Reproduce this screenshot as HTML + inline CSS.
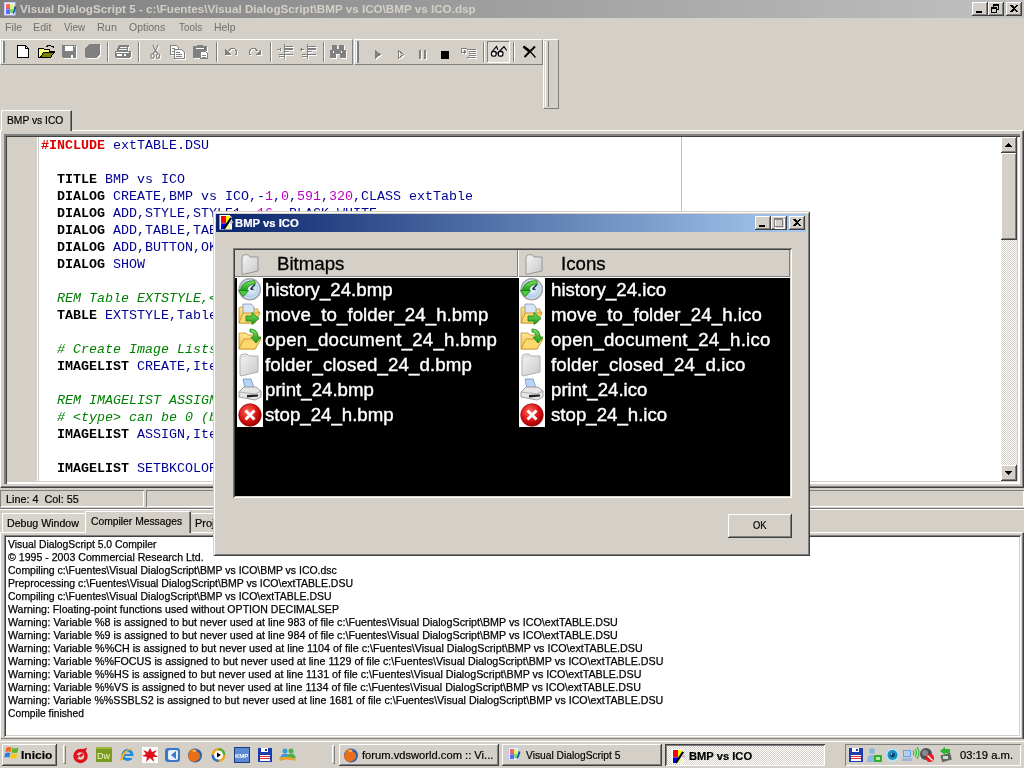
<!DOCTYPE html>
<html><head><meta charset="utf-8">
<style>
*{box-sizing:border-box}
html,body{margin:0;padding:0}
body{will-change:transform;width:1024px;height:768px;overflow:hidden;position:relative;background:#d4d0c8;font-family:"Liberation Sans",sans-serif;font-size:11px;color:#000}
.a{position:absolute}
.t{position:absolute;white-space:pre;line-height:1;transform-origin:0 0;-webkit-text-stroke-width:0.2px}
.raised{border-top:1px solid #fff;border-left:1px solid #fff;border-right:1px solid #808080;border-bottom:1px solid #808080}
.btn{position:absolute;background:#d4d0c8;box-shadow:inset -1px -1px 0 #404040,inset 1px 1px 0 #fff,inset -2px -2px 0 #808080}
.sunk{position:absolute;box-shadow:inset 1px 1px 0 #808080,inset -1px -1px 0 #fff,inset 2px 2px 0 #404040,inset -2px -2px 0 #d4d0c8}
.sep{position:absolute;width:2px;border-left:1px solid #808080;border-right:1px solid #fff}
.code{position:absolute;left:41px;font-family:"Liberation Mono",monospace;font-size:13.333px;line-height:17px;white-space:pre;color:#000094}
.k{font-weight:bold;color:#000}
.r{font-weight:bold;color:#e00000}
.n{color:#c000c0}
.c{font-style:italic;color:#008000}
.ol{-webkit-text-stroke-width:0.25px;position:absolute;left:8px;line-height:13px;white-space:pre;transform-origin:0 0}
</style></head>
<body>
<svg width="0" height="0" style="position:absolute">
<defs>
 <linearGradient id="gGreen" x1="0" y1="0" x2="0" y2="1"><stop offset="0" stop-color="#7fe060"/><stop offset="1" stop-color="#1a9a1a"/></linearGradient>
 <linearGradient id="gYel" x1="0" y1="0" x2="0" y2="1"><stop offset="0" stop-color="#fde89a"/><stop offset="1" stop-color="#f0b840"/></linearGradient>
 <radialGradient id="gRed" cx="0.4" cy="0.35" r="0.7"><stop offset="0" stop-color="#ff6a5a"/><stop offset="0.6" stop-color="#d81010"/><stop offset="1" stop-color="#8a0000"/></radialGradient>
 <linearGradient id="gGray" x1="0" y1="0" x2="1" y2="1"><stop offset="0" stop-color="#f4f4f4"/><stop offset="1" stop-color="#c8c8c8"/></linearGradient>
 <radialGradient id="gClock" cx="0.55" cy="0.5" r="0.6"><stop offset="0" stop-color="#eef6ff"/><stop offset="1" stop-color="#8fb8e0"/></radialGradient>
 <symbol id="iHist" viewBox="0 0 24 24">
  <circle cx="11.8" cy="11.2" r="10.5" fill="url(#gClock)" stroke="#a4a4ac" stroke-width="1.6"/>
  <circle cx="11.8" cy="11.2" r="9.2" fill="none" stroke="#e8eef4" stroke-width="0.8"/>
  <path d="M12.5 11 L17 6.5 M12.5 11 L15.5 11.5" stroke="#1a2a3a" stroke-width="1.4" fill="none"/>
  <path d="M2.3 12.5 Q3.5 3 16.5 2.6 L17.5 6 Q10 6 8.8 12.5 Z" fill="url(#gGreen)" stroke="#127812" stroke-width="0.7"/>
  <path d="M0.3 12.3 L10.5 12.6 L5.2 18.6 Z" fill="#4ccc3a" stroke="#127812" stroke-width="0.8"/>
 </symbol>
 <symbol id="iMove" viewBox="0 0 24 24">
  <path d="M1 5 L1 20 L16 20 L22 9 L20 9 L20 6 L10 6 L8 4 L2 4 Z" fill="url(#gYel)" stroke="#c89020" stroke-width="0.8"/>
  <path d="M5 1 L13 1 L16 4 L16 13 L5 13 Z" fill="#d8e4f8" stroke="#8090b0" stroke-width="0.8"/>
  <path d="M1 20 L5 10 L22 10 L17 20 Z" fill="#fcd870" stroke="#c89020" stroke-width="0.8"/>
  <path d="M8 13 L14 13 L14 9.5 L21 15.5 L14 21.5 L14 18 L8 18 Z" fill="url(#gGreen)" stroke="#168016" stroke-width="0.8"/>
 </symbol>
 <symbol id="iOpen" viewBox="0 0 24 24">
  <path d="M1 5 L1 21 L17 21 L23 10 L20 10 L20 7 L10 7 L8 5 Z" fill="url(#gYel)" stroke="#c89020" stroke-width="0.8"/>
  <path d="M1 21 L6 11 L23 11 L17 21 Z" fill="#fcd870" stroke="#c89020" stroke-width="0.8"/>
  <path d="M12 1 Q20 1 20 9 L23 9 L18 15 L13 9 L16 9 Q16 4 12 4 Z" fill="url(#gGreen)" stroke="#168016" stroke-width="0.8"/>
 </symbol>
 <symbol id="iFold" viewBox="0 0 24 24">
  <path d="M2 4 Q2 1 6 1 L9 1 L11 3 L20 3 L20 19 L3 23 L2 22 Z" fill="url(#gGray)" stroke="#a8a8a8" stroke-width="0.9"/>
  <path d="M2 6 Q5 2 9 3" stroke="#d0d0d0" fill="none"/>
 </symbol>
 <symbol id="iPrint" viewBox="0 0 24 24">
  <path d="M5 1 L13 1 L16 10 L7 11 Z" fill="#b8d4f4" stroke="#7090c0" stroke-width="0.8"/>
  <path d="M1 14 L6 9 L18 9 L23 13 L23 19 L17 22 L1 19 Z" fill="#e6e6e6" stroke="#8a8a8a" stroke-width="0.8"/>
  <path d="M1 14 L17 16 L23 13" stroke="#a0a0a0" fill="none" stroke-width="0.8"/>
  <path d="M9 17 L20 16.5 L20 18.5 L9 19.5 Z" fill="#202020"/>
 </symbol>
 <symbol id="iStop" viewBox="0 0 24 24">
  <circle cx="12" cy="12" r="11.3" fill="url(#gRed)" stroke="#900000" stroke-width="0.6"/>
  <path d="M7.5 7.5 L16.5 16.5 M16.5 7.5 L7.5 16.5" stroke="#fff" stroke-width="3"/>
 </symbol>
 <symbol id="iHdr" viewBox="0 0 18 21">
  <path d="M1 4 Q1 0.5 5 0.5 Q8 0.5 9 3 L17 3 L17 17 L1 20.5 Z" fill="url(#gGray)" stroke="#909090" stroke-width="0.9"/>
 </symbol>
</defs></svg>
<svg width="0" height="0" style="position:absolute"><defs>
 <symbol id="vdsIcon" viewBox="0 0 16 16">
  <path d="M1.5 1 H11.5 L14 3.5 V15.5 H1.5 Z" fill="#fff"/>
  <rect x="3" y="2" width="5" height="7" fill="#f00"/>
  <rect x="3" y="8.5" width="5" height="1" fill="#c02080"/>
  <rect x="3" y="9.5" width="5" height="5.5" fill="#0000f0"/>
  <path d="M8 2 H11.5 L12 3.5 L8.5 9 H8 Z" fill="#ffff00"/>
  <path d="M8 9 H9 L8 11.5 Z" fill="#40c020"/>
  <path d="M6.5 15 L13 15 L13 11.5 L10 10.5 Z" fill="#f0f0b8"/>
  <path d="M13.2 3.8 L5.8 14.8" stroke="#000" stroke-width="2.2"/>
  <path d="M12.8 6 L15.5 8 L13 10.5 L11.5 9 Z" fill="#c8c8c8"/>
 </symbol>
 <symbol id="winFlag" viewBox="0 0 16 16">
  <path d="M2 3 Q4 1.5 7.5 2.5 L6.5 7 Q4 6 1.5 7.3 Z" fill="#f06a20"/>
  <path d="M8.3 2.8 Q11 4 14.5 2.8 L13.5 7.5 Q10.5 8.5 7.3 7.3 Z" fill="#5cb82a"/>
  <path d="M1.2 8.2 Q3.8 6.8 6.3 8 L5.3 12.6 Q3 11.4 0.3 12.8 Z" fill="#2d7ae0"/>
  <path d="M7.1 8.2 Q10 9.4 13.3 8.3 L12.4 13 Q9.4 14.2 6.1 12.8 Z" fill="#f7c814"/>
 </symbol>
 <symbol id="ffIcon" viewBox="0 0 16 16">
  <circle cx="8" cy="8.5" r="7" fill="#3060b0"/>
  <path d="M2 6 Q3 2 7 1.5 Q5 3 6 5 Q9 3 12 6 Q14 9 12 12 Q9 15.5 5 14.5 Q1 13 1 9 Z" fill="#e8701a"/>
  <path d="M5 3 Q8 2 10 3.5 Q8 4 9 5 L6 5 Z" fill="#ffb040"/>
 </symbol>
 <symbol id="floppy" viewBox="0 0 16 16" shape-rendering="crispEdges">
  <path d="M1 1 H14 L15 2 V15 H1 Z" fill="#1c3cb0"/>
  <rect x="4" y="1" width="7" height="4" fill="#fff"/><rect x="8" y="2" width="2" height="2" fill="#1c3cb0"/>
  <rect x="3" y="8" width="10" height="6" fill="#fff"/><rect x="3" y="9" width="10" height="1" fill="#e03040"/><rect x="3" y="11" width="10" height="1" fill="#e03040"/>
 </symbol>
</defs></svg>
<!-- ============ TITLE BAR ============ -->
<div class="a" style="left:0;top:0;width:1024px;height:18px;background:linear-gradient(to right,#7f7f7f,#c0c0c0)"></div>
<div class="t" id="title" style="left:20.00px;top:4px;font-weight:bold;color:#d4d0c8;font-size:11px;-webkit-text-stroke-width:0;transform:scaleX(1.0593)">Visual DialogScript 5 - c:\Fuentes\Visual DialogScript\BMP vs ICO\BMP vs ICO.dsp</div>
<div class="btn" style="left:972px;top:2px;width:16px;height:14px"></div>
<div class="btn" style="left:988px;top:2px;width:16px;height:14px"></div>
<div class="btn" style="left:1006px;top:2px;width:16px;height:14px"></div>

<svg width="0" height="0" style="position:absolute"><defs><symbol id="vdsMain" viewBox="0 0 18 18">
 <rect x="4.5" y="2.5" width="10.5" height="12.5" fill="#eef0ff" stroke="#c8ccf0"/>
 <rect x="6" y="4" width="4" height="5" fill="#f06a60"/><rect x="6" y="8.5" width="4" height="1" fill="#b050c0"/><rect x="6" y="9.5" width="4" height="4.5" fill="#6468f4"/>
 <rect x="10" y="4.5" width="3.5" height="4.5" fill="#e4f468"/><rect x="10" y="9" width="3" height="4" fill="#70e070"/>
 <path d="M14.5 6 L16.5 7 L15 11.5 L13.5 14 L12.5 13 L13.5 10 Z" fill="#1a58b0"/>
</symbol></defs></svg>
<svg class="a" style="left:0;top:0" width="18" height="18"><use href="#vdsMain"/></svg>
<svg class="a" style="left:972px;top:2px" width="50" height="14" shape-rendering="crispEdges">
 <rect x="4" y="9" width="6" height="2" fill="#000"/>
 <rect x="21" y="2" width="6" height="2" fill="#000"/><rect x="26" y="2" width="1" height="6" fill="#000"/><rect x="25" y="7" width="2" height="1" fill="#000"/>
 <rect x="19" y="5" width="6" height="2" fill="#000"/><rect x="19" y="5" width="1" height="6" fill="#000"/><rect x="24" y="5" width="1" height="6" fill="#000"/><rect x="19" y="10" width="6" height="1" fill="#000"/>
 <rect x="21" y="2" width="1" height="3" fill="#000"/>
 <path d="M38 3 H40 L42 5 L44 3 H46 L43 6.5 L46 10 H44 L42 8 L40 10 H38 L41 6.5 Z" fill="#000"/>
</svg>
<!-- ============ MENU ============ -->
<div class="t" id="m_file" style="left:5.03px;top:22px;color:#6f6f6f;-webkit-text-stroke-width:0;transform:scaleX(0.9688)">File</div>
<div class="t" id="m_edit" style="left:32.78px;top:22px;color:#6f6f6f;-webkit-text-stroke-width:0;transform:scaleX(0.9722)">Edit</div>
<div class="t" id="m_view" style="left:63.75px;top:22px;color:#6f6f6f;-webkit-text-stroke-width:0;transform:scaleX(0.8854)">View</div>
<div class="t" id="m_run" style="left:96.51px;top:22px;color:#6f6f6f;-webkit-text-stroke-width:0;transform:scaleX(0.9868)">Run</div>
<div class="t" id="m_opt" style="left:128.80px;top:22px;color:#6f6f6f;-webkit-text-stroke-width:0;transform:scaleX(0.9553)">Options</div>
<div class="t" id="m_tools" style="left:178.60px;top:22px;color:#6f6f6f;-webkit-text-stroke-width:0;transform:scaleX(0.9000)">Tools</div>
<div class="t" id="m_help" style="left:214.05px;top:22px;color:#6f6f6f;-webkit-text-stroke-width:0;transform:scaleX(0.9476)">Help</div>

<!-- ============ TOOLBARS ============ -->
<div class="a raised" style="left:0;top:39px;width:353px;height:26px"></div>
<div class="a raised" style="left:354px;top:39px;width:189px;height:26px"></div>
<div class="a raised" style="left:543px;top:39px;width:16px;height:70px"></div>

<svg class="a" style="left:0;top:38px" width="560" height="30" viewBox="0 38 560 30" shape-rendering="crispEdges">
<rect x="2" y="41" width="1" height="22" fill="#fff"/><rect x="3" y="41" width="2" height="22" fill="#808080"/><rect x="356" y="41" width="1" height="22" fill="#fff"/><rect x="357" y="41" width="2" height="22" fill="#808080"/><rect x="107" y="42" width="1" height="20" fill="#808080"/><rect x="108" y="42" width="1" height="20" fill="#fff"/><rect x="138" y="42" width="1" height="20" fill="#808080"/><rect x="139" y="42" width="1" height="20" fill="#fff"/><rect x="216" y="42" width="1" height="20" fill="#808080"/><rect x="217" y="42" width="1" height="20" fill="#fff"/><rect x="270" y="42" width="1" height="20" fill="#808080"/><rect x="271" y="42" width="1" height="20" fill="#fff"/><rect x="323" y="42" width="1" height="20" fill="#808080"/><rect x="324" y="42" width="1" height="20" fill="#fff"/><rect x="483" y="42" width="1" height="20" fill="#808080"/><rect x="484" y="42" width="1" height="20" fill="#fff"/><rect x="513" y="42" width="1" height="20" fill="#808080"/><rect x="514" y="42" width="1" height="20" fill="#fff"/><path d="M17.5 45.5 H25.5 L28.5 48.5 V57.5 H17.5 Z" fill="#fff" stroke="#000"/><path d="M25.5 45.5 V48.5 H28.5" fill="none" stroke="#000"/><path d="M38.5 48.5 H43.5 L44.5 49.5 H49.5 V51.5 H54.5 L50.5 57.5 H38.5 Z" fill="#ffff80" stroke="#000"/><path d="M40.5 57.5 L43.5 52.5 H54 L50.5 57.5 Z" fill="#808000" stroke="#000"/><path d="M46.5 47 Q48 44.5 50.5 45.5 L52 47" fill="none" stroke="#000"/><path d="M51 46 H54 V49 Z" fill="#000"/><g transform="translate(1,1)"><path d="M62 45 H76 V58 H63 L62 57 Z" fill="#fff"/></g><path d="M62 45 H76 V58 H63 L62 57 Z" fill="#808080"/><rect x="65" y="46" width="8" height="5" fill="#fff"/><rect x="71" y="55" width="2" height="3" fill="#fff"/><rect x="74" y="46" width="1" height="1" fill="#fff"/><g transform="translate(1,1)"><path d="M89 44 H100 V55 H99 V56 H98 V57 H97 V58 H86 V57 H85 V48 H86 V47 H87 V46 H88 V45 H89 Z" fill="#ffffff"/></g><g><path d="M89 44 H100 V55 H99 V56 H98 V57 H97 V58 H86 V57 H85 V48 H86 V47 H87 V46 H88 V45 H89 Z" fill="#808080"/></g><g transform="translate(1,1)"><path d="M119 45 H129 V47 H128 V51 H131 V57 H130 V58 H116 V57 H115 V51 H117 V48 H118 V46 H119 Z" fill="#ffffff"/></g><g><path d="M119 45 H129 V47 H128 V51 H131 V57 H130 V58 H116 V57 H115 V51 H117 V48 H118 V46 H119 Z" fill="#808080"/></g><rect x="120" y="47" width="7" height="1" fill="#fff" opacity=".9"/><rect x="119" y="49" width="8" height="1" fill="#fff" opacity=".9"/><rect x="116" y="52" width="13" height="1" fill="#fff"/><rect x="117" y="54" width="5" height="2" fill="#fff"/><rect x="124" y="54" width="2" height="2" fill="#fff"/><g transform="translate(1,1)" shape-rendering="auto"><path d="M153 45 L155.5 51 L153 53.5 M158 45 L155.5 51 L158 53.5" fill="none" stroke="#ffffff" stroke-width="1.1"/><ellipse cx="152.5" cy="56" rx="1.6" ry="2.3" fill="none" stroke="#ffffff" stroke-width="1.1"/><ellipse cx="158" cy="56" rx="1.6" ry="2.3" fill="none" stroke="#ffffff" stroke-width="1.1"/></g><g shape-rendering="auto"><path d="M153 45 L155.5 51 L153 53.5 M158 45 L155.5 51 L158 53.5" fill="none" stroke="#808080" stroke-width="1.1"/><ellipse cx="152.5" cy="56" rx="1.6" ry="2.3" fill="none" stroke="#808080" stroke-width="1.1"/><ellipse cx="158" cy="56" rx="1.6" ry="2.3" fill="none" stroke="#808080" stroke-width="1.1"/></g><g transform="translate(1,1)"><path d="M170.5 45.5 H176.5 L178.5 47.5 V49.5 H174.5 V54.5 H170.5 Z" fill="#fff" stroke="#ffffff"/><path d="M174.5 49.5 H181.5 L184.5 52.5 V58.5 H174.5 Z" fill="#fff" stroke="#ffffff"/><path d="M172 48 H175 M172 51 H174 M176 52 H180 M176 54 H182 M176 56 H182" stroke="#ffffff"/></g><g><path d="M170.5 45.5 H176.5 L178.5 47.5 V49.5 H174.5 V54.5 H170.5 Z" fill="#fff" stroke="#808080"/><path d="M174.5 49.5 H181.5 L184.5 52.5 V58.5 H174.5 Z" fill="#fff" stroke="#808080"/><path d="M172 48 H175 M172 51 H174 M176 52 H180 M176 54 H182 M176 56 H182" stroke="#808080"/></g><g transform="translate(1,1)"><path d="M193 46 H207 V51 H201 V58 H193 Z" fill="#ffffff"/><path d="M197 45 H203 V47 H197 Z" fill="#ffffff"/></g><g><path d="M193 46 H207 V51 H201 V58 H193 Z" fill="#808080"/><path d="M197 45 H203 V47 H197 Z" fill="#808080"/></g><rect x="196" y="48" width="8" height="1" fill="#fff"/><path d="M200.5 51.5 H205.5 L207.5 53.5 V58.5 H200.5 Z" fill="#fff" stroke="#808080"/><path d="M202 55 H206 M202 57 H206" stroke="#808080"/><g transform="translate(1,1)"><path d="M225 49 V55 H231 Z" fill="#ffffff"/><path d="M228 51 Q231 47.5 235 49 Q237 51 236 55" fill="none" stroke="#ffffff" stroke-width="1.2"/></g><g><path d="M225 49 V55 H231 Z" fill="#808080"/><path d="M228 51 Q231 47.5 235 49 Q237 51 236 55" fill="none" stroke="#808080" stroke-width="1.2"/></g><g transform="translate(1,1)"><path d="M261 49 V55 H255 Z" fill="#ffffff"/><path d="M258 51 Q255 47.5 251 49 Q249 51 250 55" fill="none" stroke="#ffffff" stroke-width="1.2"/></g><g><path d="M261 49 V55 H255 Z" fill="#808080"/><path d="M258 51 Q255 47.5 251 49 Q249 51 250 55" fill="none" stroke="#808080" stroke-width="1.2"/></g><g transform="translate(1,1)"><rect x="284" y="46" width="9" height="1" fill="#ffffff"/><rect x="284" y="48" width="9" height="2" fill="#ffffff"/><rect x="284" y="51" width="5" height="1" fill="#ffffff"/><rect x="279" y="54" width="14" height="1" fill="#ffffff"/><rect x="279" y="56" width="6" height="1" fill="#ffffff"/><rect x="284" y="44" width="1" height="15" fill="#ffffff"/><path d="M277 49 H281 M280 48 V51" stroke="#ffffff"/></g><g><rect x="284" y="46" width="9" height="1" fill="#808080"/><rect x="284" y="48" width="9" height="2" fill="#808080"/><rect x="284" y="51" width="5" height="1" fill="#808080"/><rect x="279" y="54" width="14" height="1" fill="#808080"/><rect x="279" y="56" width="6" height="1" fill="#808080"/><rect x="284" y="44" width="1" height="15" fill="#808080"/><path d="M277 49 H281 M280 48 V51" stroke="#808080"/></g><g transform="translate(1,1)"><rect x="307" y="46" width="9" height="1" fill="#ffffff"/><rect x="307" y="48" width="9" height="2" fill="#ffffff"/><rect x="307" y="51" width="5" height="1" fill="#ffffff"/><rect x="302" y="54" width="14" height="1" fill="#ffffff"/><rect x="302" y="56" width="6" height="1" fill="#ffffff"/><rect x="307" y="44" width="1" height="15" fill="#ffffff"/><path d="M300 49 H304 M301 48 V51" stroke="#ffffff"/></g><g><rect x="307" y="46" width="9" height="1" fill="#808080"/><rect x="307" y="48" width="9" height="2" fill="#808080"/><rect x="307" y="51" width="5" height="1" fill="#808080"/><rect x="302" y="54" width="14" height="1" fill="#808080"/><rect x="302" y="56" width="6" height="1" fill="#808080"/><rect x="307" y="44" width="1" height="15" fill="#808080"/><path d="M300 49 H304 M301 48 V51" stroke="#808080"/></g><g transform="translate(1,1)"><path d="M332 45 H337 V49 H339 V45 H344 V50 H346 V58 H340 V54 H336 V58 H330 V50 H332 Z" fill="#ffffff"/></g><g><path d="M332 45 H337 V49 H339 V45 H344 V50 H346 V58 H340 V54 H336 V58 H330 V50 H332 Z" fill="#808080"/></g><rect x="333" y="51" width="1" height="2" fill="#fff"/><rect x="341" y="51" width="1" height="2" fill="#fff"/><g transform="translate(1,1)"><path d="M375 50 L381 54.5 L375 59 Z" fill="#ffffff"/></g><g><path d="M375 50 L381 54.5 L375 59 Z" fill="#808080"/></g><g transform="translate(1,1)"><path d="M398.5 50.5 L403.5 54.5 L398.5 58.5 Z" fill="none" stroke="#ffffff"/></g><g><path d="M398.5 50.5 L403.5 54.5 L398.5 58.5 Z" fill="none" stroke="#808080"/></g><g transform="translate(1,1)"><rect x="419" y="50" width="2" height="9" fill="#ffffff"/><rect x="424" y="50" width="2" height="9" fill="#ffffff"/></g><g><rect x="419" y="50" width="2" height="9" fill="#808080"/><rect x="424" y="50" width="2" height="9" fill="#808080"/></g><rect x="441" y="51" width="8" height="8" fill="#000"/><g transform="translate(1,1)"><path d="M461 48 H467 M461 48 V52 H465" fill="none" stroke="#ffffff"/><path d="M464 50 L467 52 L464 54 Z" fill="#ffffff"/><path d="M467 49 H476 M469 51 H476 M469 53 H476 M469 55 H476 M467 57 H476" stroke="#ffffff"/></g><g><path d="M461 48 H467 M461 48 V52 H465" fill="none" stroke="#808080"/><path d="M464 50 L467 52 L464 54 Z" fill="#808080"/><path d="M467 49 H476 M469 51 H476 M469 53 H476 M469 55 H476 M467 57 H476" stroke="#808080"/></g><rect x="487" y="41" width="23" height="1" fill="#808080"/><rect x="487" y="41" width="1" height="22" fill="#808080"/><rect x="487" y="62" width="23" height="1" fill="#fff"/><rect x="509" y="41" width="1" height="22" fill="#fff"/><rect x="488" y="42" width="21" height="20" fill="#e6e4de" opacity=".55"/><g shape-rendering="auto"><path d="M492.2 51.5 L496.5 46.3 L497.8 49.8 M499.3 51.5 L504 46.6 L506.7 50.5" fill="none" stroke="#000" stroke-width="1.1"/><rect x="491.5" y="51.5" width="4.6" height="4.6" rx="1.6" fill="#fff" stroke="#000" stroke-width="1.3"/><rect x="498.3" y="51.5" width="4.6" height="4.6" rx="1.6" fill="#fff" stroke="#000" stroke-width="1.3"/><path d="M496 53 H498.5" stroke="#000" stroke-width="1"/></g><g shape-rendering="auto"><path d="M523.5 46.5 L528 49 L535.5 57.5" fill="none" stroke="#000" stroke-width="1.2"/><path d="M523.5 46.5 L530 52" fill="none" stroke="#000" stroke-width="2.4"/><path d="M535 46.5 L524.5 57" fill="none" stroke="#000" stroke-width="2"/></g></svg>
<div class="a" style="left:545px;top:41px;width:1px;height:66px;background:#fff"></div><div class="a" style="left:548px;top:41px;width:1px;height:66px;background:#808080"></div>
<!-- ============ EDITOR TAB ============ -->
<div class="a" style="left:0;top:130px;width:1024px;height:358px;border-top:1px solid #fff;border-left:1px solid #fff;border-right:1px solid #404040;border-bottom:1px solid #404040;box-shadow:inset -1px -1px 0 #808080"></div>
<div class="a" style="left:1px;top:110px;width:71px;height:21px;background:#d4d0c8;border-top:1px solid #fff;border-left:1px solid #fff;border-right:1px solid #404040;box-shadow:inset -1px 0 0 #808080"></div>
<div class="t" id="t_tab" style="left:6.87px;top:115px;transform:scaleX(0.9339)">BMP vs ICO</div>

<!-- editor -->
<div class="a" style="left:4px;top:134px;width:1016px;height:350px;background:#fff;box-shadow:inset 2px 2px 0 #808080,inset 3px 3px 0 #404040,inset -2px -2px 0 #fff,inset -3px -3px 0 #d4d0c8"></div>
<div class="a" style="left:7px;top:137px;width:30px;height:344px;background:#d4d0c8"></div>
<div class="a" style="left:37px;top:137px;width:1px;height:344px;background:#fff"></div>
<div class="a" style="left:38px;top:137px;width:1px;height:344px;background:#c8c8c8"></div>
<div class="a" style="left:681px;top:137px;width:1px;height:344px;background:#c0c0c0"></div>

<!-- code -->
<div class="code" style="top:137px"><span class="r">#INCLUDE</span> extTABLE.DSU

  <span class="k">TITLE</span> BMP vs ICO
  <span class="k">DIALOG</span> CREATE,BMP vs ICO,-<span class="n">1</span>,<span class="n">0</span>,<span class="n">591</span>,<span class="n">320</span>,CLASS extTable
  <span class="k">DIALOG</span> ADD,STYLE,STYLE1,,<span class="n">16</span>,,BLACK,WHITE
  <span class="k">DIALOG</span> ADD,TABLE,TABLE1,<span class="n">10</span>,<span class="n">10</span>,<span class="n">560</span>,<span class="n">250</span>
  <span class="k">DIALOG</span> ADD,BUTTON,OK,<span class="n">270</span>,<span class="n">500</span>
  <span class="k">DIALOG</span> SHOW

  <span class="c">REM Table EXTSTYLE,&lt;style&gt;</span>
  <span class="k">TABLE</span> EXTSTYLE,Table1,FULLROWSELECT

  <span class="c"># Create Image Lists</span>
  <span class="k">IMAGELIST</span> CREATE,Items

  <span class="c">REM IMAGELIST ASSIGN,&lt;list&gt;,&lt;type&gt;</span>
  <span class="c"># &lt;type&gt; can be 0 (bitmap) or 1 (icon)</span>
  <span class="k">IMAGELIST</span> ASSIGN,Items,Table1

  <span class="k">IMAGELIST</span> SETBKCOLOR,Items,WHITE
</div>

<!-- scrollbar -->
<div class="a" style="left:1001px;top:137px;width:16px;height:344px;background-image:conic-gradient(#fff 25%,#d4d0c8 0 50%,#fff 0 75%,#d4d0c8 0);background-size:2px 2px"></div>
<div class="btn" style="left:1001px;top:137px;width:16px;height:16px"></div>
<div class="btn" style="left:1001px;top:153px;width:16px;height:87px"></div>
<div class="btn" style="left:1001px;top:465px;width:16px;height:16px"></div>
<svg class="a" style="left:1001px;top:137px" width="16" height="16" shape-rendering="crispEdges"><rect x="7" y="6" width="1" height="1"/><rect x="6" y="7" width="3" height="1"/><rect x="5" y="8" width="5" height="1"/><rect x="4" y="9" width="7" height="1"/></svg>
<svg class="a" style="left:1001px;top:465px" width="16" height="16" shape-rendering="crispEdges"><rect x="4" y="6" width="7" height="1"/><rect x="5" y="7" width="5" height="1"/><rect x="6" y="8" width="3" height="1"/><rect x="7" y="9" width="1" height="1"/></svg>
<!-- ============ STATUS BAR ============ -->
<div class="sunk" style="left:0;top:490px;width:144px;height:17px;box-shadow:inset 1px 1px 0 #808080,inset -1px -1px 0 #fff"></div>
<div class="sunk" style="left:146px;top:490px;width:878px;height:17px;box-shadow:inset 1px 1px 0 #808080,inset -1px -1px 0 #fff"></div>
<div class="a" style="left:0;top:508px;width:1024px;height:1px;background:#707070"></div>
<div class="t" id="t_line" style="left:6.32px;top:494px;transform:scaleX(0.9822)">Line: 4  Col: 55</div>

<!-- ============ OUTPUT TABS ============ -->
<div class="a" style="left:0;top:509px;width:1024px;height:1px;background:#fff"></div>
<div class="a" style="left:0;top:532px;width:1024px;height:208px;border-top:1px solid #fff;border-left:1px solid #fff;border-right:1px solid #404040;border-bottom:1px solid #404040;box-shadow:inset -1px -1px 0 #808080"></div>
<div class="a" style="left:2px;top:513px;width:83px;height:19px;background:#d8d4cc;border-top:1px solid #fff;border-left:1px solid #fff"></div>
<div class="t" id="t_debug" style="left:6.84px;top:518px;transform:scaleX(0.9635)">Debug Window</div>
<div class="a" style="left:85px;top:511px;width:106px;height:22px;background:#d4d0c8;border-top:1px solid #fff;border-left:1px solid #fff;border-right:1px solid #404040;box-shadow:inset -1px 0 0 #808080"></div>
<div class="t" id="t_comp" style="left:91.06px;top:516px;transform:scaleX(0.9375)">Compiler Messages</div>
<div class="a" style="left:191px;top:513px;width:80px;height:19px;background:#d4d0c8;border-top:1px solid #fff;box-shadow:inset -1px 0 0 #808080"></div>
<div class="t" id="t_proj" style="left:195px;top:518px">Project</div>
<div class="sunk" style="left:4px;top:535px;width:1017px;height:202px;background:#fff"></div>
<div class="ol" id="ol0" style="top:538px;transform:scaleX(0.942)">Visual DialogScript 5.0 Compiler</div>
<div class="ol" id="ol1" style="top:551px;transform:scaleX(0.963)">© 1995 - 2003 Commercial Research Ltd.</div>
<div class="ol" id="ol2" style="top:564px;transform:scaleX(0.952)">Compiling c:\Fuentes\Visual DialogScript\BMP vs ICO\BMP vs ICO.dsc</div>
<div class="ol" id="ol3" style="top:577px;transform:scaleX(0.955)">Preprocessing c:\Fuentes\Visual DialogScript\BMP vs ICO\extTABLE.DSU</div>
<div class="ol" id="ol4" style="top:590px;transform:scaleX(0.952)">Compiling c:\Fuentes\Visual DialogScript\BMP vs ICO\extTABLE.DSU</div>
<div class="ol" id="ol5" style="top:603px;transform:scaleX(0.961)">Warning: Floating-point functions used without OPTION DECIMALSEP</div>
<div class="ol" id="ol6" style="top:616px;transform:scaleX(0.975)">Warning: Variable %8 is assigned to but never used at line 983 of file c:\Fuentes\Visual DialogScript\BMP vs ICO\extTABLE.DSU</div>
<div class="ol" id="ol7" style="top:629px;transform:scaleX(0.975)">Warning: Variable %9 is assigned to but never used at line 984 of file c:\Fuentes\Visual DialogScript\BMP vs ICO\extTABLE.DSU</div>
<div class="ol" id="ol8" style="top:642px;transform:scaleX(0.976)">Warning: Variable %%CH is assigned to but never used at line 1104 of file c:\Fuentes\Visual DialogScript\BMP vs ICO\extTABLE.DSU</div>
<div class="ol" id="ol9" style="top:655px;transform:scaleX(0.974)">Warning: Variable %%FOCUS is assigned to but never used at line 1129 of file c:\Fuentes\Visual DialogScript\BMP vs ICO\extTABLE.DSU</div>
<div class="ol" id="ol10" style="top:668px;transform:scaleX(0.975)">Warning: Variable %%HS is assigned to but never used at line 1131 of file c:\Fuentes\Visual DialogScript\BMP vs ICO\extTABLE.DSU</div>
<div class="ol" id="ol11" style="top:681px;transform:scaleX(0.975)">Warning: Variable %%VS is assigned to but never used at line 1134 of file c:\Fuentes\Visual DialogScript\BMP vs ICO\extTABLE.DSU</div>
<div class="ol" id="ol12" style="top:694px;transform:scaleX(0.968)">Warning: Variable %%SSBLS2 is assigned to but never used at line 1681 of file c:\Fuentes\Visual DialogScript\BMP vs ICO\extTABLE.DSU</div>
<div class="ol" id="ol13" style="top:707px;transform:scaleX(0.934)">Compile finished</div>


<!-- ============ TASKBAR ============ -->
<div class="a" style="left:0;top:739px;width:1024px;height:29px;background:#d4d0c8"></div>
<div class="a" style="left:0;top:741px;width:1024px;height:1px;background:#fff"></div>
<div class="btn" style="left:2px;top:744px;width:55px;height:22px"></div>
<svg class="a" style="left:4px;top:745px" width="16" height="16"><use href="#winFlag"/></svg>
<div class="t" id="tk_start" style="left:20.85px;top:750px;font-weight:bold;font-size:11.5px;transform:scaleX(1.0483)">Inicio</div>
<div class="a" style="left:63px;top:745px;width:3px;height:19px;border-left:1px solid #fff;border-top:1px solid #fff;border-right:1px solid #808080;border-bottom:1px solid #808080"></div>
<svg class="a" style="left:72px;top:746px" width="230" height="18">
 <!-- 1 red swirl -->
 <circle cx="8.5" cy="10" r="5.5" fill="none" stroke="#e0101a" stroke-width="3.4"/><path d="M9 4 L15 1.5 L13.5 6 Z" fill="#e0101a"/><path d="M7.5 10.5 L11 8" stroke="#e0101a" stroke-width="2.2"/><rect x="4.5" y="9" width="2" height="3" fill="#e0101a"/>
 <!-- 2 Dw -->
 <rect x="24" y="1" width="16" height="15" fill="#7a9a20"/><rect x="24" y="1" width="16" height="2" fill="#9ab840"/>
 <text x="25" y="12.5" font-family="Liberation Sans" font-size="9" fill="#f4f8d0">Dw</text>
 <!-- 3 IE -->
 <circle cx="55.5" cy="9" r="6" fill="#1f8ae0"/><circle cx="55.5" cy="9" r="3" fill="#d4d0c8"/><rect x="52" y="8" width="8" height="2" fill="#1f8ae0"/><rect x="57" y="10" width="4" height="2" fill="#d4d0c8"/>
 <path d="M48 14 Q50 3 62 2 Q52 5 50 15 Z" fill="#f0b020"/>
 <!-- 4 red splash -->
 <rect x="70" y="1" width="16" height="16" fill="#fff"/>
 <path d="M78 2 L80 6 L85 4 L82 8 L86 11 L81 11 L82 16 L78 12 L74 16 L75 11 L70 10 L74 8 L71 4 L76 6 Z" fill="#e0101a"/>
 <!-- 5 blue -->
 <rect x="93" y="2" width="15" height="14" rx="3" fill="#3a78c8"/><rect x="96" y="4" width="10" height="10" rx="2" fill="#e8f0fa"/><path d="M99 9 L104 5 L104 13 Z" fill="#3a78c8"/>
 <!-- 6 firefox -->
 <use href="#ffIcon" x="115" y="1" width="16" height="16"/>
 <!-- 7 WMP -->
 <circle cx="146.5" cy="9" r="7" fill="#f0a020"/><path d="M146.5 2 A7 7 0 0 1 153.5 9 L146.5 9 Z" fill="#50b030"/><path d="M139.5 9 A7 7 0 0 0 146.5 16 L146.5 9 Z" fill="#2070d0"/>
 <circle cx="146.5" cy="9" r="4.5" fill="#fff"/><path d="M145 6.5 L149 9 L145 11.5 Z" fill="#000"/>
 <!-- 8 KMP -->
 <rect x="162" y="1" width="16" height="16" fill="#1a3c7a"/><rect x="163" y="2" width="14" height="14" fill="#5a8ad0"/>
 <text x="163" y="12" font-family="Liberation Sans" font-weight="bold" font-size="6" fill="#fff">KMP</text>
 <!-- 9 floppy -->
 <use href="#floppy" x="185" y="1" width="16" height="16"/>
 <!-- 10 msn -->
 <circle cx="213" cy="5" r="2.5" fill="#3a9ad8"/><circle cx="219" cy="5" r="2.5" fill="#4ab048"/>
 <path d="M208 12 Q210 7 213 8 Q216 7 218 12 Z" fill="#3a9ad8"/><path d="M214 12 Q216 7 219 8 Q222 7 224 12 Z" fill="#4ab048"/>
 <path d="M207 12 Q215 9 224 13 L223 15 Q215 12 208 15 Z" fill="#f0a030"/>
</svg>
<div class="a" style="left:332px;top:745px;width:3px;height:19px;border-left:1px solid #fff;border-top:1px solid #fff;border-right:1px solid #808080;border-bottom:1px solid #808080"></div>
<div class="btn" style="left:339px;top:744px;width:160px;height:22px"></div>
<svg class="a" style="left:343px;top:747px" width="16" height="16"><use href="#ffIcon"/></svg>
<div class="t" id="tk_b1" style="left:362.00px;top:750px;transform:scaleX(1.0155)">forum.vdsworld.com :: Vi...</div>
<div class="btn" style="left:502px;top:744px;width:160px;height:22px"></div>
<svg class="a" style="left:504px;top:745px" width="18" height="18"><use href="#vdsMain"/></svg>
<div class="t" id="tk_b2" style="left:526.00px;top:750px;transform:scaleX(0.9317)">Visual DialogScript 5</div>
<div class="a" style="left:665px;top:744px;width:160px;height:22px;box-shadow:inset 1px 1px 0 #404040,inset -1px -1px 0 #fff,inset 2px 2px 0 #808080;background-image:conic-gradient(#fff 25%,#d4d0c8 0 50%,#fff 0 75%,#d4d0c8 0);background-size:2px 2px"></div>
<div class="a" style="left:667px;top:746px;width:157px;height:19px;background-image:conic-gradient(#fff 25%,#d4d0c8 0 50%,#fff 0 75%,#d4d0c8 0);background-size:2px 2px;opacity:.55"></div>
<div class="a" style="left:665px;top:744px;width:160px;height:22px;box-shadow:inset 1px 1px 0 #404040,inset -1px -1px 0 #fff,inset 2px 2px 0 #808080"></div>
<svg class="a" style="left:670px;top:748px" width="16" height="16"><use href="#vdsIcon"/></svg>
<div class="t" id="tk_b3" style="left:688.89px;top:751px;font-weight:bold;transform:scaleX(1.0148)">BMP vs ICO</div>
<div class="a" style="left:845px;top:744px;width:176px;height:22px;box-shadow:inset 1px 1px 0 #808080,inset -1px -1px 0 #fff"></div>
<svg class="a" style="left:846px;top:746px" width="110" height="18">
 <use href="#floppy" x="2" y="1" width="16" height="16"/>
 <circle cx="26" cy="5" r="3" fill="#8ab8e0"/><path d="M21 16 Q21 8 26 9 Q31 8 31 16 Z" fill="#8ab8e0"/><rect x="28" y="9" width="8" height="7" rx="1" fill="#30b030"/><rect x="30" y="11" width="4" height="3" fill="#b0f0a0"/>
 <circle cx="46.5" cy="9" r="7" fill="#c0e0f0"/><circle cx="46.5" cy="9" r="5" fill="#1a90c0"/><circle cx="46.5" cy="9" r="2.3" fill="#0a3a60"/><circle cx="45.5" cy="8" r=".8" fill="#fff"/>
 <rect x="57" y="4" width="8" height="7" fill="#6aa0e0"/><rect x="58" y="5" width="6" height="5" fill="#b0d0f0"/><rect x="56" y="12" width="10" height="3" fill="#a0b8d8"/>
 <path d="M67 5 Q69 7 67 9 M69 3 Q72 7 69 11 M71 1 Q75 7 71 13" fill="none" stroke="#30c030" stroke-width="1.2"/>
 <circle cx="80" cy="8" r="6" fill="#505058"/><circle cx="79" cy="7" r="3" fill="#8a8a90"/><circle cx="84" cy="12" r="4" fill="#e02020"/><path d="M81.5 9.5 L86.5 14.5" stroke="#fff" stroke-width="1.3"/>
 <rect x="95" y="8" width="10" height="7" fill="#606860" transform="rotate(-15 100 11)"/><rect x="97" y="10" width="5" height="3" fill="#d0d8d0"/>
 <path d="M94 5 L99 1 L99 3 L104 3 L104 7 L99 7 L99 9 Z" fill="#30b030"/>
</svg>
<div class="t" id="tk_clock" style="left:960.40px;top:750px;transform:scaleX(1.0216)">03:19 a.m.</div>

<!-- ============ DIALOG ============ -->
<div class="a" style="left:213px;top:211px;width:597px;height:345px;background:#d4d0c8;box-shadow:inset 1px 1px 0 #d4d0c8,inset -1px -1px 0 #404040,inset 2px 2px 0 #fff,inset -2px -2px 0 #808080"></div>
<div class="a" style="left:216px;top:214px;width:590px;height:18px;background:linear-gradient(to right,#0a246a,#a6caf0)"></div>
<div class="t" id="d_title" style="left:234.68px;top:218px;font-weight:bold;color:#fff;transform:scaleX(1.0246)">BMP vs ICO</div>
<div class="btn" style="left:755px;top:216px;width:16px;height:14px"></div>
<div class="btn" style="left:771px;top:216px;width:16px;height:14px"></div>
<div class="btn" style="left:789px;top:216px;width:16px;height:14px"></div>

<svg class="a" style="left:218px;top:214px" width="16" height="16"><use href="#vdsIcon"/></svg>
<svg class="a" style="left:755px;top:216px" width="50" height="14" shape-rendering="crispEdges">
 <rect x="4" y="9" width="6" height="2" fill="#000"/>
 <g transform="translate(1,1)"><rect x="19" y="2" width="9" height="9" fill="none" stroke="#fff"/></g>
 <path d="M19.5 2.5 H27.5 V10.5 H19.5 Z M19.5 3.5 H27.5" fill="none" stroke="#808080"/>
 <path d="M38 3 H40 L42 5 L44 3 H46 L43 6.5 L46 10 H44 L42 8 L40 10 H38 L41 6.5 Z" fill="#000"/>
</svg>
<!-- listview -->
<div class="sunk" style="left:233px;top:248px;width:559px;height:250px;background:#000"></div>
<div class="a" style="left:235px;top:250px;width:283px;height:27px;background:#d4d0c8;box-shadow:inset -1px -1px 0 #808080"></div>
<div class="a" style="left:518px;top:250px;width:272px;height:27px;background:#d4d0c8;box-shadow:inset 1px 0 0 #fff,inset -1px -1px 0 #808080"></div>
<div class="a" style="left:235px;top:277px;width:555px;height:1px;background:#fff"></div>
<svg class="a" style="left:241px;top:254px" width="18" height="21"><use href="#iHdr"/></svg>
<svg class="a" style="left:525px;top:254px" width="18" height="21"><use href="#iHdr"/></svg>
<div class="t" style="left:277px;top:255px;font-size:18.67px;-webkit-text-stroke:0.3px #000">Bitmaps</div>
<div class="t" style="left:561px;top:255px;font-size:18.67px;-webkit-text-stroke:0.3px #000">Icons</div>
<div class="a" style="left:237px;top:277px;width:26px;height:150px;background:#fff"></div>
<div class="a" style="left:519px;top:277px;width:26px;height:150px;background:#fff"></div>
<svg class="a" style="left:238px;top:278px" width="24" height="24"><use href="#iHist"/></svg>
<svg class="a" style="left:520px;top:278px" width="24" height="24"><use href="#iHist"/></svg>
<div class="t" style="left:265px;top:281px;font-size:18.67px;color:#fff;-webkit-text-stroke:0.4px #fff">history_24.bmp</div>
<div class="t" style="left:551px;top:281px;font-size:18.67px;color:#fff;-webkit-text-stroke:0.4px #fff">history_24.ico</div>
<svg class="a" style="left:238px;top:303px" width="24" height="24"><use href="#iMove"/></svg>
<svg class="a" style="left:520px;top:303px" width="24" height="24"><use href="#iMove"/></svg>
<div class="t" style="left:265px;top:306px;font-size:18.67px;color:#fff;-webkit-text-stroke:0.4px #fff;letter-spacing:0.06px">move_to_folder_24_h.bmp</div>
<div class="t" style="left:551px;top:306px;font-size:18.67px;color:#fff;-webkit-text-stroke:0.4px #fff;letter-spacing:0.06px">move_to_folder_24_h.ico</div>
<svg class="a" style="left:238px;top:328px" width="24" height="24"><use href="#iOpen"/></svg>
<svg class="a" style="left:520px;top:328px" width="24" height="24"><use href="#iOpen"/></svg>
<div class="t" style="left:265px;top:331px;font-size:18.67px;color:#fff;-webkit-text-stroke:0.4px #fff;letter-spacing:0.22px">open_document_24_h.bmp</div>
<div class="t" style="left:551px;top:331px;font-size:18.67px;color:#fff;-webkit-text-stroke:0.4px #fff;letter-spacing:0.22px">open_document_24_h.ico</div>
<svg class="a" style="left:238px;top:353px" width="24" height="24"><use href="#iFold"/></svg>
<svg class="a" style="left:520px;top:353px" width="24" height="24"><use href="#iFold"/></svg>
<div class="t" style="left:265px;top:356px;font-size:18.67px;color:#fff;-webkit-text-stroke:0.4px #fff;letter-spacing:0.12px">folder_closed_24_d.bmp</div>
<div class="t" style="left:551px;top:356px;font-size:18.67px;color:#fff;-webkit-text-stroke:0.4px #fff;letter-spacing:0.12px">folder_closed_24_d.ico</div>
<svg class="a" style="left:238px;top:378px" width="24" height="24"><use href="#iPrint"/></svg>
<svg class="a" style="left:520px;top:378px" width="24" height="24"><use href="#iPrint"/></svg>
<div class="t" style="left:265px;top:381px;font-size:18.67px;color:#fff;-webkit-text-stroke:0.4px #fff">print_24.bmp</div>
<div class="t" style="left:551px;top:381px;font-size:18.67px;color:#fff;-webkit-text-stroke:0.4px #fff">print_24.ico</div>
<svg class="a" style="left:238px;top:403px" width="24" height="24"><use href="#iStop"/></svg>
<svg class="a" style="left:520px;top:403px" width="24" height="24"><use href="#iStop"/></svg>
<div class="t" style="left:265px;top:406px;font-size:18.67px;color:#fff;-webkit-text-stroke:0.4px #fff">stop_24_h.bmp</div>
<div class="t" style="left:551px;top:406px;font-size:18.67px;color:#fff;-webkit-text-stroke:0.4px #fff">stop_24_h.ico</div>
<div class="btn" style="left:728px;top:514px;width:64px;height:24px"></div>
<div class="t" id="d_ok" style="left:752.80px;top:520px;font-size:11px;transform:scaleX(0.8500)">OK</div>
</body></html>
